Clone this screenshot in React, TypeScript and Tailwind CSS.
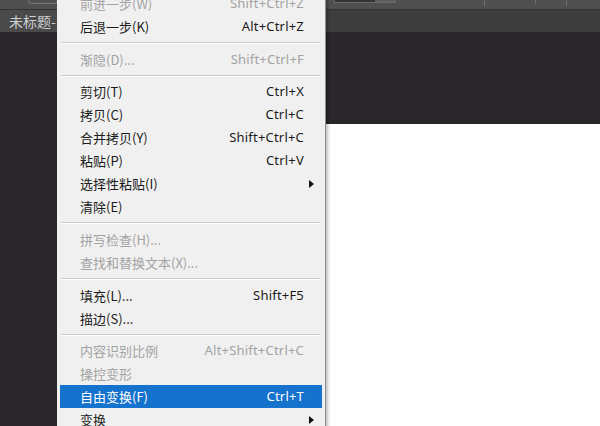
type Item =
  | { kind: 'sep'; h: string }
  | { kind: 'row'; label: string; shortcut?: string; disabled?: boolean; sub?: boolean; active?: boolean }

const items: Item[] = [
  { kind: 'row', label: '前进一步(W)', shortcut: 'Shift+Ctrl+Z', disabled: true },
  { kind: 'row', label: '后退一步(K)', shortcut: 'Alt+Ctrl+Z' },
  { kind: 'sep', h: 'h-[10px]' },
  { kind: 'row', label: '渐隐(D)...', shortcut: 'Shift+Ctrl+F', disabled: true },
  { kind: 'sep', h: 'h-[9px]' },
  { kind: 'row', label: '剪切(T)', shortcut: 'Ctrl+X' },
  { kind: 'row', label: '拷贝(C)', shortcut: 'Ctrl+C' },
  { kind: 'row', label: '合并拷贝(Y)', shortcut: 'Shift+Ctrl+C' },
  { kind: 'row', label: '粘贴(P)', shortcut: 'Ctrl+V' },
  { kind: 'row', label: '选择性粘贴(I)', sub: true },
  { kind: 'row', label: '清除(E)' },
  { kind: 'sep', h: 'h-[10px]' },
  { kind: 'row', label: '拼写检查(H)...', disabled: true },
  { kind: 'row', label: '查找和替换文本(X)...', disabled: true },
  { kind: 'sep', h: 'h-[10px]' },
  { kind: 'row', label: '填充(L)...', shortcut: 'Shift+F5' },
  { kind: 'row', label: '描边(S)...' },
  { kind: 'sep', h: 'h-[9px]' },
  { kind: 'row', label: '内容识别比例', shortcut: 'Alt+Shift+Ctrl+C', disabled: true },
  { kind: 'row', label: '操控变形', disabled: true },
  { kind: 'row', label: '自由变换(F)', shortcut: 'Ctrl+T', active: true },
  { kind: 'row', label: '变换', sub: true },
]

function Arrow({ light }: { light?: boolean }) {
  return (
    <svg width="5" height="8" viewBox="0 0 5 8" className="absolute right-[8px] top-1/2 -translate-y-1/2">
      <path d="M0 0 L5 4 L0 8 Z" fill={light ? '#ffffff' : '#111111'} />
    </svg>
  )
}

export default function App() {
  return (
    <div className="relative h-[426px] w-[600px] overflow-hidden bg-[#29272a] font-['Noto_Sans','Noto_Sans_CJK_SC',sans-serif]">
      {/* options bar */}
      <div className="flex h-[10px] items-start border-b border-[#333] bg-[#505050]">
        <div className="ml-[28px] h-[4px] w-[30px] rounded-b-sm border border-t-0 border-[#7a7a7a]" />
        <div className="ml-[276px] flex h-[3px] w-[62px] border border-t-0 border-[#6a6a6a]">
          <div className="w-[40px] bg-[#333]" />
          <div className="flex-1 bg-[#5e5e5e]" />
        </div>
        <div className="ml-[88px] h-[6px] w-px bg-[#6e6e6e]" />
        <div className="ml-[50px] h-[4px] w-px bg-[#6e6e6e]" />
        <div className="ml-[30px] h-[6px] w-px bg-[#6e6e6e]" />
      </div>
      {/* tab bar */}
      <div className="flex h-[22px] items-stretch bg-[#3d3d3d]">
        <div className="flex w-[70px] items-center bg-[#4a4a4a] pl-[9px] font-['Noto_Sans_CJK_SC',sans-serif] text-[14px] leading-none text-[#cfcfcf]">
          未标题-1
        </div>
      </div>
      {/* canvas area */}
      <div className="flex h-[394px] flex-col">
        <div className="h-[92px]" />
        <div className="ml-[200px] flex-1 bg-white" />
      </div>

      {/* Edit menu */}
      <div className="absolute left-[57px] top-[-10px] w-[269px] border-r border-[#8e8e8e] bg-[#f0f0f0] px-[3px] pt-[2px] shadow-[2px_0_3px_rgba(0,0,0,0.25)]">
        {items.map((it, i) =>
          it.kind === 'sep' ? (
            <div key={i} className={`flex items-center px-[1px] ${it.h}`}>
              <div className="h-[2px] w-full border-t border-b border-t-[#c8c8c8] border-b-white" />
            </div>
          ) : (
            <div
              key={i}
              className={`relative flex h-[23px] items-center justify-between pl-[20px] pr-[18px] text-[13px] leading-none ${
                it.active ? 'bg-[#1572cd] text-white' : it.disabled ? 'text-[#a3a3a3]' : 'text-[#1b1b1b]'
              }`}
            >
              <span className="font-['Noto_Sans_CJK_SC',sans-serif]">{it.label}</span>
              {it.shortcut && <span className="font-['Noto_Sans',sans-serif] tracking-[0.2px]">{it.shortcut}</span>}
              {it.sub && <Arrow light={it.active} />}
            </div>
          ),
        )}
      </div>
    </div>
  )
}
